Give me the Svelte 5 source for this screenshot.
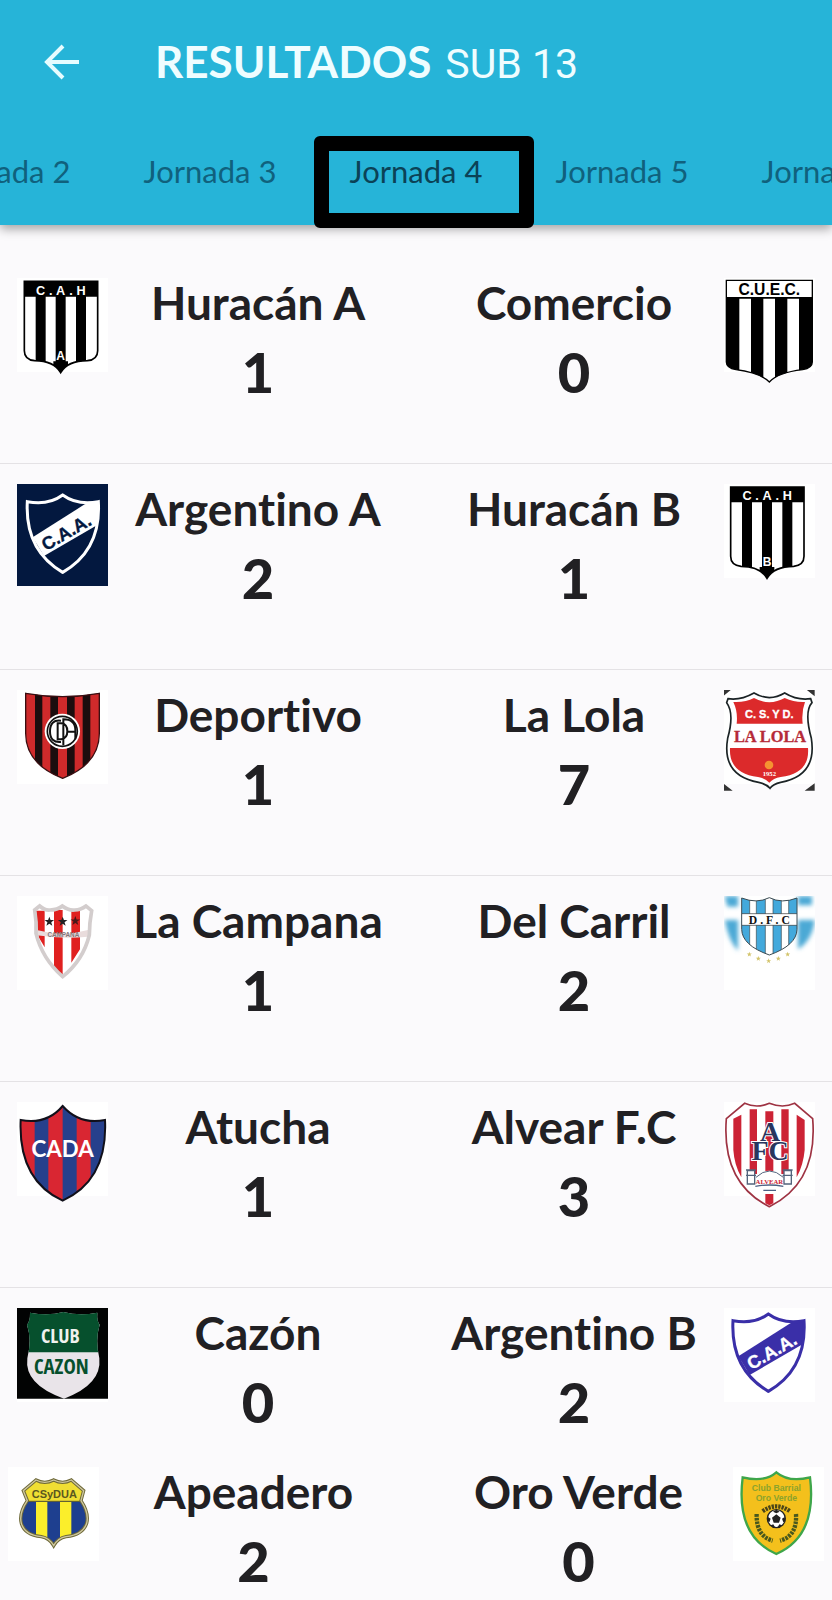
<script lang="ts">
  type Team = { name: string; goals: number; crest: string; view: string };
  type Match = { home: Team; away: Team };

  const rounds = [2, 3, 4, 5, 6];
  let current = $state(4);

  const matches: Match[] = [
    {
      home: { name: "Huracán A", goals: 1, crest: "cahA", view: "51 54 273 318" },
      away: { name: "Comercio", goals: 0, crest: "cuec", view: "924 54 273 318" },
    },
    {
      home: { name: "Argentino A", goals: 2, crest: "caaNavy", view: "51 42 273 318" },
      away: { name: "Huracán B", goals: 1, crest: "cahB", view: "53 55 273 318" },
    },
    {
      home: { name: "Deportivo", goals: 1, crest: "deportivo", view: "51 60 273 318" },
      away: { name: "La Lola", goals: 7, crest: "lola", view: "66 60 273 318" },
    },
    {
      home: { name: "La Campana", goals: 1, crest: "campana", view: "51 48 273 318" },
      away: { name: "Del Carril", goals: 2, crest: "carril", view: "66 48 273 318" },
    },
    {
      home: { name: "Atucha", goals: 1, crest: "atucha", view: "51 36 273 318" },
      away: { name: "Alvear F.C", goals: 3, crest: "alvear", view: "66 36 273 318" },
    },
    {
      home: { name: "Cazón", goals: 0, crest: "cazon", view: "51 54 273 318" },
      away: { name: "Argentino B", goals: 2, crest: "caaBlue", view: "55 57 273 318" },
    },
    {
      home: { name: "Apeadero", goals: 2, crest: "apeadero", view: "24 531 273 318" },
      away: { name: "Oro Verde", goals: 0, crest: "oroVerde", view: "2199 531 273 318" },
    },
  ];

  const cahShape =
    "M73 64H293V272Q293 299 262 302Q203 302 182 338Q161 302 104 302Q73 299 73 272Z";
  const cuecShape =
    "M931 61H1189V306Q1189 324 1160 329Q1085 338 1060 366Q1032 338 960 329Q931 324 931 306Z";
  const caaShape =
    "M82 95Q145 107 188 75Q232 107 295 95Q304 240 188 307Q74 240 82 95Z";
  const deportivoShape =
    "M77 70Q188 90 298 70V190Q298 282 188 325Q77 282 77 190Z";
  const lolaShape =
    "M78 86Q115 92 156 69Q178 82 202 83Q226 82 248 69Q286 92 326 86L330 98Q306 125 328 205Q346 317 236 337Q213 342 204 355Q193 342 170 337Q58 317 77 205Q98 130 74 98Z";
  const campanaShape =
    "M104 90L119 78Q135 92 150 90Q172 90 187 78Q205 92 224 90Q242 90 258 78L275 92Q268 130 268 165Q250 240 188 290Q126 235 108 160Q110 125 104 90Z";
  const carrilShape =
    "M119 54Q164 72 202 53Q240 72 285 54V148Q284 196 202 225Q120 196 119 148Z";
  const atuchaShape =
    "M62 90Q140 105 188 48Q238 105 315 90Q324 270 188 332Q54 270 62 90Z";
  const alvearShape =
    "M128 40Q164 56 202 40Q242 56 278 40L332 86Q348 278 202 350Q58 278 73 86Z";
  const cazonShape =
    "M90 68Q145 78 190 66Q238 78 292 68Q290 92 299 104Q285 150 298 205Q306 284 192 326Q72 284 82 205Q96 150 81 104Q91 92 90 68Z";
  const apeaderoShape =
    "M108 570Q134 584 161 570Q188 584 214 570L251 602L243 632Q268 670 260 700Q248 735 198 740Q174 744 161 767Q148 744 124 740Q74 735 64 700Q56 670 82 632L70 602Z";
  const oroShape =
    "M2228 562Q2294 578 2329 547Q2366 578 2430 562Q2452 738 2329 792Q2206 738 2228 562Z";
</script>

{#snippet cah(letter: string, id: string)}
  <clipPath {id}><path d={cahShape} /></clipPath>
  <path d={cahShape} fill="#fff" />
  <g clip-path="url(#{id})">
    <path d="M70 60h226v50H70zM107 100h30v240h-30zM167 100h30v240h-30zM228 100h30v240h-30zM160 304h44v40h-44z" />
  </g>
  <path d={cahShape} fill="none" stroke="#000" stroke-width="5" />
  <g class="sans" fill="#fff" text-anchor="middle">
    <text x="122" y="104" font-size="38">C</text>
    <text x="152" y="104" font-size="38">.</text>
    <text x="182" y="104" font-size="38">A</text>
    <text x="213" y="104" font-size="38">.</text>
    <text x="243" y="104" font-size="38">H</text>
    <text x="182" y="301" font-size="36">{letter}</text>
  </g>
{/snippet}

{#snippet caa(line: string, field: string, ink: string, id: string)}
  <clipPath {id}><path d={caaShape} /></clipPath>
  <path d={caaShape} fill={field} />
  <path d="M98 202L254 103L302 92L292 165L132 258Z" fill={line} clip-path="url(#{id})" />
  <path d={caaShape} fill="none" stroke={line} stroke-width="9" />
  <text class="sans" x="199" y="206" font-size="54" fill={ink} stroke={ink} text-anchor="middle" transform="rotate(-30 199 188)">C.A.A.</text>
{/snippet}

{#snippet star(x: number, y: number, r: number, fill: string)}
  <path transform="translate({x} {y}) scale({r})" d="M0-1L.25-.32.95-.31.38.12.59.81 0 .4-.59.81-.38.12-.95-.31-.25-.32Z" {fill} />
{/snippet}

{#snippet crest(team: Team)}
  <svg class="crest" viewBox={team.view} role="img" aria-label="Escudo de {team.name}">
    {#if team.crest === "cahA"}
      {@render cah("A", "clip-cah-a")}
    {:else if team.crest === "cahB"}
      {@render cah("B", "clip-cah-b")}
    {:else if team.crest === "cuec"}
      <clipPath id="clip-cuec"><path d={cuecShape} /></clipPath>
      <path d={cuecShape} fill="#fff" />
      <path d="M928 112h42v260h-42zM1005 112h37v260h-37zM1077 112h37v260h-37zM1149 112h44v260h-44zM928 111h262v5H928z" clip-path="url(#clip-cuec)" />
      <path d={cuecShape} fill="none" stroke="#000" stroke-width="4" />
      <text class="sans" x="1060" y="105" font-size="47" text-anchor="middle">C.U.E.C.</text>
    {:else if team.crest === "caaNavy"}
      <path d="M51 42h273v306H51z" fill="#03183f" />
      {@render caa("#fff", "#03183f", "#03183f", "clip-caa-navy")}
    {:else if team.crest === "caaBlue"}
      {@render caa("#3a2fa8", "#fff", "#fff", "clip-caa-blue")}
    {:else if team.crest === "deportivo"}
      <clipPath id="clip-deportivo"><path d={deportivoShape} /></clipPath>
      <path d={deportivoShape} fill="#cf2a2b" />
      <path d="M105 60h22v280h-22zM151 60h23v280h-23zM201 60h23v280h-23zM248 60h23v280h-23z" fill="#1b0d0e" clip-path="url(#clip-deportivo)" />
      <path d={deportivoShape} fill="none" stroke="#3a0f12" stroke-width="4" />
      <circle cx="187" cy="184" r="53" fill="#fff" />
      <circle cx="187" cy="184" r="45" fill="none" stroke="#111" stroke-width="5" />
      <path d="M183 152Q150 148 150 184Q150 219 183 216M173 160V208H184Q202 205 202 184Q202 162 184 160ZM190 226V148Q226 148 226 180V208M202 185H228" fill="none" stroke="#111" stroke-width="6" />
    {:else if team.crest === "lola"}
      <path d="M63 57h27L63 79zM338 57h-27l27 22zM63 362h29l-29-22zM338 362h-30l30-22z" fill="#333" />
      <path d={lolaShape} fill="#fff" stroke="#1c2426" stroke-width="5" />
      <path d="M94 96Q130 98 156 84Q178 96 202 97Q226 96 248 84Q278 98 309 96Q298 125 302 161H104Q108 125 94 96ZM84 234H318Q324 310 236 321Q214 325 202 338Q190 325 168 321Q80 310 84 234Z" fill="#dc2a2b" />
      <text class="sans" x="202" y="144" font-size="33" fill="#fff" stroke="#fff" text-anchor="middle">C. S. Y D.</text>
      <text class="serif" x="204" y="217" font-size="49" fill="#b52a38" stroke="#b52a38" text-anchor="middle">LA LOLA</text>
      <circle cx="201" cy="285" r="13" fill="#f59331" />
      <text class="serif" x="202" y="318" font-size="20" fill="#fff" text-anchor="middle">1952</text>
    {:else if team.crest === "campana"}
      <clipPath id="clip-campana"><path d={campanaShape} /></clipPath>
      <path d={campanaShape} fill="#fff" />
      <g fill="#e0201f" clip-path="url(#clip-campana)">
        <path d="M108 92h26v110l-18-30zM162 90h26v200l-26-26zM214 90h26v118l-26 40z" />
      </g>
      <path d="M110 150Q188 172 264 150V170Q188 178 110 166Z" fill="#e9dcdc" />
      <path d={campanaShape} fill="none" stroke="#d3cdcd" stroke-width="11" />
      <text class="sans" x="190" y="172" font-size="19" fill="#857679" text-anchor="middle">CAMPANA</text>
      {@render star(148, 125, 15, "#222")}
      {@render star(188, 125, 15, "#222")}
      {@render star(226, 123, 15, "#4a1718")}
    {:else if team.crest === "carril"}
      <defs>
        <filter id="flag-soft" x="-20%" y="-20%" width="140%" height="140%"><feGaussianBlur stdDeviation="6" /></filter>
      </defs>
      <g fill="#4ba9d5" filter="url(#flag-soft)">
        <path d="M68 48H108V80H76ZM288 48H330V76H288ZM68 120H108V212Q80 184 68 120ZM288 120H338Q332 180 288 208Z" />
      </g>
      <clipPath id="clip-carril"><path d={carrilShape} /></clipPath>
      <path d={carrilShape} fill="#fff" />
      <g clip-path="url(#clip-carril)">
        <path d="M119 45h24v190h-24zM163 45h27v190h-27zM213 45h25v190h-25zM260 45h25v190h-25z" fill="#43a9dc" />
        <path d="M143 45v190M163 45v190M190 45v190M213 45v190M238 45v190M260 45v190" stroke="#3a4a52" stroke-width="2" />
        <path d="M112 101h180v35H112z" fill="#fff" stroke="#333" stroke-width="2" />
      </g>
      <path d={carrilShape} fill="none" stroke="#3a4a52" stroke-width="3" />
      <text class="serif" x="202" y="131" font-size="35" fill="#111" text-anchor="middle">D . F . C</text>
      {@render star(142, 223, 8, "#d3c46b")}
      {@render star(169, 236, 8, "#d3c46b")}
      {@render star(200, 243, 8, "#d3c46b")}
      {@render star(229, 236, 8, "#d3c46b")}
      {@render star(257, 223, 8, "#d3c46b")}
    {:else if team.crest === "atucha"}
      <clipPath id="clip-atucha"><path d={atuchaShape} /></clipPath>
      <path d={atuchaShape} fill="#d92632" />
      <path d="M104 40h41v300h-41zM188 40h42v300h-42zM272 40h50v300h-50z" fill="#26408c" clip-path="url(#clip-atucha)" />
      <path d={atuchaShape} fill="none" stroke="#11101a" stroke-width="6" />
      <text class="lato" x="188" y="201" font-size="67" fill="#fff" text-anchor="middle">CADA</text>
    {:else if team.crest === "alvear"}
      <path d={alvearShape} fill="#fff" stroke="#9e3343" stroke-width="5" />
      <path d="M94 86L118 74V262Q97 226 94 180ZM143 58H165V252H143ZM190 64H214V244H190ZM238 58H260V252H238ZM284 74L308 90V180Q304 226 284 262ZM190 312H214V340L202 346L190 340Z" fill="#cc2335" />
      <path d="M160 258Q202 226 244 258V292H160Z" fill="#fff" />
      <g class="serif monogram" fill="#28365f" stroke="#fff" stroke-width="6" text-anchor="middle">
        <text x="204" y="152" font-size="84">A</text>
        <text x="174" y="209" font-size="84">F</text>
        <text x="230" y="209" font-size="84">C</text>
      </g>
      <path d="M136 242h22v40h-22zM246 242h22v40h-22zM132 240h30M242 240h30M132 256h30M242 256h30" fill="#fff" stroke="#53647c" stroke-width="4" />
      <path d="M162 262Q202 224 244 262" fill="none" stroke="#53647c" stroke-width="3" />
      <text class="serif" x="202" y="282" font-size="20" fill="#cc2335" text-anchor="middle">ALVEAR</text>
      <path d="M160 289Q202 281 244 289M184 301H222" fill="none" stroke="#4c6083" stroke-width="4" />
    {:else if team.crest === "cazon"}
      <path d="M51 54h273v272H51z" fill="#020303" />
      <clipPath id="clip-cazon"><path d={cazonShape} /></clipPath>
      <path d={cazonShape} fill="#e9e4e9" />
      <path d="M70 54h240v133H70z" fill="#06502d" clip-path="url(#clip-cazon)" />
      <g class="condensed" text-anchor="middle">
        <text x="181" y="158" font-size="60" fill="#f0f2ee">CLUB</text>
        <text x="184" y="253" font-size="62" fill="#06502d">CAZON</text>
      </g>
    {:else if team.crest === "apeadero"}
      <clipPath id="clip-apeadero"><path d={apeaderoShape} /></clipPath>
      <g clip-path="url(#clip-apeadero)">
        <path d="M50 560h222v75H50z" fill="#f0de33" />
        <path d="M50 635h222v140H50z" fill="#1e3f8f" />
        <path d="M108 635h34v140h-34zM180 635h34v140h-34z" fill="#fbee2b" />
        <path d="M50 634h222" stroke="#4c4d2c" stroke-width="3" />
      </g>
      <path d={apeaderoShape} fill="none" stroke="#6f6a39" stroke-width="10" />
      <path d={apeaderoShape} fill="none" stroke="#cfc8a0" stroke-width="4" />
      <text class="sans" x="163" y="625" font-size="33" fill="#5b5720" text-anchor="middle">CSyDUA</text>
    {:else if team.crest === "oroVerde"}
      <path d={oroShape} fill="#f4c01c" stroke="#3fa64a" stroke-width="7" />
      <g class="sans" fill="#8ba32c" text-anchor="middle">
        <text x="2329" y="604" font-size="26">Club Barrial</text>
        <text x="2329" y="634" font-size="26">Oro Verde</text>
      </g>
      <path d="M2270 672Q2268 738 2318 752M2388 672Q2392 738 2340 752" fill="none" stroke="#49581e" stroke-width="13" stroke-dasharray="8 3" />
      <path d="M2288 664Q2329 634 2370 664" fill="none" stroke="#4b4519" stroke-width="13" stroke-dasharray="7 3" />
      <circle cx="2329" cy="686" r="27" fill="#fff" stroke="#222" stroke-width="4" />
      <path d="M2329 673L2342 683L2337 698H2321L2316 683ZM2329 659l10 6-10 5-10-5zM2304 681l8 5-4 11-6-4zM2354 681l-8 5 4 11 6-4zM2312 706l8-3 5 9-6 1zM2346 706l-8-3-5 9 6 1z" fill="#222" />
    {/if}
  </svg>
{/snippet}

{#snippet score(team: Team)}
  <div class="team">
    <h2>{team.name}</h2>
    <p>{team.goals}</p>
  </div>
{/snippet}

<header>
  <div class="bar">
    <button class="back" aria-label="Volver">
      <svg viewBox="0 0 36 36">
        <path d="M19 2L3 18L19 34M3 18H35" />
      </svg>
    </button>
    <h1>RESULTADOS <span>SUB 13</span></h1>
  </div>
  <nav>
    {#each rounds as round}
      <button class="tab" class:active={round === current} onclick={() => (current = round)}>
        Jornada {round}
      </button>
    {/each}
  </nav>
</header>

<main>
  {#each matches as match}
    <section class="match">
      {@render crest(match.home)}
      <div class="teams">
        {@render score(match.home)}
        {@render score(match.away)}
      </div>
      {@render crest(match.away)}
    </section>
  {/each}
</main>

<style>
  :global(body) {
    background: #fbfafc;
    color: #212023;
    font-family: Lato, "Open Sans", sans-serif;
    font-variant-ligatures: none;
  }

  header {
    position: relative;
    background: #26b4d8;
    box-shadow: 0 4px 10px rgba(0, 0, 0, 0.35);
  }

  button {
    padding: 0;
    border: 0;
    background: none;
    font: inherit;
    cursor: pointer;
  }

  .bar {
    display: flex;
    align-items: center;
    gap: 75px;
    height: 124px;
    padding: 0 44px;
  }

  .back {
    flex: none;
    width: 36px;
    height: 36px;
  }

  .back svg {
    display: block;
    fill: none;
    stroke: #e6fcff;
    stroke-width: 4;
  }

  h1 {
    display: flex;
    align-items: baseline;
    gap: 14px;
    margin: 0;
    color: #effdff;
    font-size: 44px;
    font-weight: 700;
    line-height: 52px;
    white-space: nowrap;
  }

  h1 span {
    font-family: Roboto, sans-serif;
    font-size: 41px;
    font-weight: 400;
  }

  nav {
    display: flex;
    justify-content: center;
    height: 101px;
    overflow-x: clip;
  }

  .tab {
    position: relative;
    flex: none;
    width: 206px;
    padding-bottom: 8px;
    color: #10617d;
    font-size: 31px;
  }

  .tab.active {
    color: #0b4256;
  }

  .tab.active::after {
    content: "";
    position: absolute;
    inset: 12px -15px -3px 1px;
    border: 15px solid #000;
    border-radius: 6px;
  }

  main {
    padding-top: 33px;
  }

  .match {
    display: flex;
    align-items: flex-start;
    box-sizing: border-box;
    min-height: 206px;
    padding: 18px 17px 0;
    border-bottom: 1px solid #e4e2e5;
  }

  .match:nth-last-child(2) {
    min-height: 159px;
    border-bottom: 0;
  }

  .match:last-child {
    min-height: 150px;
    padding: 18px 8px 0;
    border-bottom: 0;
  }

  .crest {
    flex: none;
    width: 91px;
    height: 106px;
    margin-top: 2px;
    background: linear-gradient(#fff 94px, transparent 94px);
  }

  .teams {
    display: grid;
    flex: 1;
    grid-template-columns: 1fr 1fr;
    gap: 16px;
  }

  .team {
    text-align: center;
    white-space: nowrap;
  }

  .team h2 {
    margin: 0;
    font-size: 46px;
    font-weight: 700;
    line-height: 54px;
  }

  .team p {
    margin: 8px 0 0;
    font-size: 56px;
    font-weight: 900;
    line-height: 67px;
  }

  .sans {
    font-family: "Liberation Sans", Arial, sans-serif;
    font-weight: 700;
  }

  .condensed {
    font-family: "Open Sans Condensed", "Liberation Sans Narrow", Roboto, sans-serif;
    font-weight: 700;
  }

  .serif {
    font-family: "Liberation Serif", serif;
    font-weight: 700;
  }

  .monogram {
    paint-order: stroke;
  }

  .lato {
    font-family: Lato, sans-serif;
    font-weight: 700;
  }
</style>
